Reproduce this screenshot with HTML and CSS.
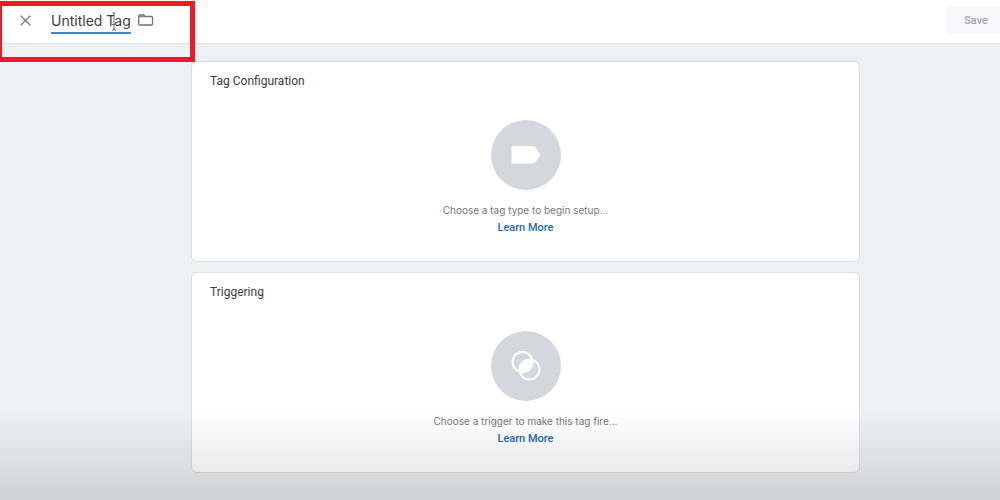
FILE: index.html
```html
<!DOCTYPE html>
<html lang="en">
<head>
<meta charset="utf-8">
<title>Untitled Tag</title>
<meta name="viewport" content="width=device-width, initial-scale=1">
<link rel="stylesheet" href="styles.css">
</head>
<body>
<header class="topbar">
  <button class="icon-button" type="button" aria-label="Close">
    <svg width="11" height="11" viewBox="0 0 11 11" fill="none" stroke="#777" stroke-width="1.3"><path d="M.7.7l9.6 9.6M10.3.7L.7 10.3"/></svg>
  </button>
  <input class="tag-name" type="text" value="Untitled Tag" aria-label="Tag name">
  <button class="icon-button" type="button" aria-label="Choose folder">
    <svg width="16" height="12" viewBox="0 0 16 12" fill="none" stroke="#707070" stroke-width="1.3" stroke-linejoin="round"><path d="M1.700 1h4l1.500 1.500h6.300q1 0 1 1V10q0 1-1 1H1.700q-1 0-1-1V2q0-1 1-1z"/><path d="M1 2.700h6.500" stroke-width="1"/></svg>
  </button>
  <button class="save" type="button" disabled>Save</button>
</header>
<main class="content">
  <section class="card">
    <h2 class="card-title">Tag Configuration</h2>
    <div class="empty">
      <svg class="badge" viewBox="0 0 70 70" aria-hidden="true"><circle cx="35" cy="35" r="35" fill="#d6d7de"/><path d="M20.500 26h21q1.500 0 2.500 1l5.500 7.700-5.500 7.700q-1 1-2.500 1h-21z" fill="#fff"/></svg>
      <p class="hint">Choose a tag type to begin setup...</p>
      <a class="learn" href="#">Learn More</a>
    </div>
  </section>
  <section class="card">
    <h2 class="card-title">Triggering</h2>
    <div class="empty">
      <svg class="badge" viewBox="0 0 70 70" aria-hidden="true"><circle cx="35" cy="35" r="35" fill="#d6d7de"/><g fill="none" stroke="#fff" stroke-width="1.9"><circle cx="31.500" cy="31" r="10"/><circle cx="38.500" cy="38.500" r="10"/></g><path d="M41.500 29A10 10 0 0 1 28.500 41A10 10 0 0 1 41.500 29z" fill="#fff"/></svg>
      <p class="hint">Choose a trigger to make this tag fire...</p>
      <a class="learn" href="#">Learn More</a>
    </div>
  </section>
</main>
<div class="shade"></div>
<div class="highlight"></div>
<svg class="cursor" width="8" height="19" viewBox="0 0 8 19" fill="none" stroke="#777" aria-hidden="true"><path d="M2.500 .5q1.500 0 1.500 1.500 0-1.500 1.500-1.500M4 2v15M2 18.500q2 0 2-2 0 2 2 2M2 12.500h4"/></svg>
</body>
</html>
```
FILE: styles.css
```css
* { box-sizing: border-box; }
body {
  margin: 0;
  min-height: 100vh;
  background: #eff0f4;
  color: #3c3c3f;
  font-family: Roboto, "Liberation Sans", sans-serif;
}
button { border: 0; font: inherit; }
.topbar {
  display: flex;
  align-items: center;
  height: 44px;
  padding: 0 0 3px 20px;
  background: #fff;
  border-bottom: 1px solid #dfe0e2;
}
.icon-button {
  display: flex;
  padding: 0;
  background: none;
}
.tag-name {
  width: 80px;
  height: 28px;
  margin: 0 7px 0 20px;
  padding: 2px 0 0;
  border: 0;
  border-bottom: 2px solid #4a83c3;
  outline: 0;
  background: none;
  color: #3c3c3f;
  font: 14px/24px Inter, Roboto, sans-serif;
}
.save {
  height: 28px;
  margin-left: auto;
  padding: 0 12px 0 18px;
  border-radius: 3px 0 0 3px;
  background: #f8f7f9;
  color: #a3a3a7;
  font-size: 11px;
  font-weight: 500;
}
.content {
  display: grid;
  gap: 10px;
  padding: 17px 14% 28px 19.1%;
}
.card {
  min-height: 201px;
  padding: 10px 18px 24px;
  border: 1px solid #dddee3;
  border-radius: 6px;
  background: #fff;
}
.card-title {
  margin: 0;
  font-size: 12px;
  font-weight: 400;
  line-height: 18px;
}
.empty {
  display: flex;
  flex-direction: column;
  align-items: center;
  margin-top: 30px;
}
.badge { width: 70px; height: 70px; }
.hint {
  margin: 11px 0 0;
  color: #77787c;
  font: 10px/18px Inter, Roboto, sans-serif;
}
.learn {
  color: #2469ad;
  font-size: 11px;
  font-weight: 500;
  line-height: 17px;
  text-decoration: none;
}
.shade {
  position: fixed;
  inset: auto 0 0;
  height: 90px;
  background: linear-gradient(rgba(0, 0, 0, 0), rgba(0, 0, 0, .12));
  pointer-events: none;
}
.highlight {
  position: absolute;
  top: 1px;
  left: 0;
  width: 195px;
  height: 61px;
  border: 5px solid #ed1c24;
  border-left-width: 2px;
  pointer-events: none;
}
.cursor {
  position: absolute;
  top: 12px;
  left: 110px;
  pointer-events: none;
}
```
